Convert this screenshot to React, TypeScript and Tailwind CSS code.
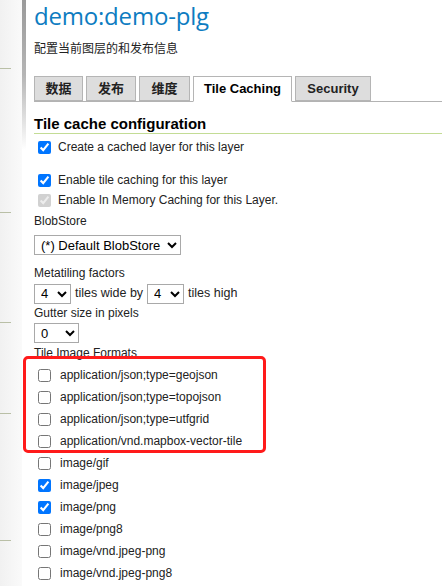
import React from "react";

const formats: { name: string; checked: boolean }[] = [
  { name: "application/json;type=geojson", checked: false },
  { name: "application/json;type=topojson", checked: false },
  { name: "application/json;type=utfgrid", checked: false },
  { name: "application/vnd.mapbox-vector-tile", checked: false },
  { name: "image/gif", checked: false },
  { name: "image/jpeg", checked: true },
  { name: "image/png", checked: true },
  { name: "image/png8", checked: false },
  { name: "image/vnd.jpeg-png", checked: false },
  { name: "image/vnd.jpeg-png8", checked: false },
];

const tabs = [
  { label: "数据", w: "w-[49px]" },
  { label: "发布", w: "w-[50px]" },
  { label: "维度", w: "w-[51px]" },
  { label: "Tile Caching", w: "w-[99px]" },
  { label: "Security", w: "w-[76px]" },
];

function Check({
  label,
  checked,
  disabled,
  className = "",
  gap = "mr-[7px]",
}: {
  label: string;
  checked?: boolean;
  disabled?: boolean;
  className?: string;
  gap?: string;
}) {
  return (
    <label className={"flex items-center " + className}>
      <input
        type="checkbox"
        defaultChecked={checked}
        disabled={disabled}
        className={"m-0 ml-[4px] h-[13px] w-[13px] " + gap}
      />
      <span>{label}</span>
    </label>
  );
}

function Select({ value, w }: { value: string; w: string }) {
  return (
    <select
      defaultValue={value}
      className={
        "h-[20px] border border-[#a9a9a9] bg-white pl-[2px] text-[13px] text-black " + w
      }
    >
      <option>{value}</option>
    </select>
  );
}

export default function App() {
  return (
    <div className="relative flex h-[586px] w-[442px] overflow-hidden bg-white text-[12px] text-[#222] [font-family:'Liberation_Sans',Arial,'Noto_Sans_CJK_SC',sans-serif]">
      {/* left nav stub */}
      <div className="flex w-[22px] flex-col bg-gradient-to-r from-[#f1f1f1] to-[#fafafa]">
        <div className="mt-[68px] h-px w-[11px] bg-[#b9bfa6]" />
        <div className="mt-[143px] h-px w-[11px] bg-[#b9bfa6]" />
        <div className="mt-[109px] h-px w-[11px] bg-[#b9bfa6]" />
        <div className="mt-[90px] h-px w-[11px] bg-[#b9bfa6]" />
        <div className="mt-[126px] h-px w-[11px] bg-[#b9bfa6]" />
      </div>
      <div className="h-[150px] w-[4px] bg-gradient-to-b from-[#9a9a9a] via-[#b5b5b5] to-white" />

      <div className="flex-1 pl-[8px]">
        <h1 className="mt-[-2px] h-[36px] text-[24px] leading-[36px] tracking-[-0.2px] text-[#0d7cc1] [font-family:'Open_Sans',sans-serif]">
          demo:demo-plg
        </h1>
        <p className="mt-[6px] h-[18px] leading-[18px]">配置当前图层的和发布信息</p>

        {/* tabs */}
        <div className="mt-[18px] flex h-[26px] items-end gap-[3px] border-b border-[#b3b3b3] text-[13px] font-bold">
          {tabs.map((t) => {
            const active = t.label === "Tile Caching";
            return (
              <div
                key={t.label}
                className={
                  "flex items-center justify-center border border-[#b5b5b5] " +
                  t.w +
                  (active
                    ? " mb-[-1px] h-[26px] border-b-white bg-white text-black"
                    : " h-[25px] bg-[#dddddd] text-[#222]")
                }
              >
                {t.label}
              </div>
            );
          })}
        </div>

        <h2 className="mt-[13px] h-[18px] text-[15px] font-bold leading-[18px] text-black">
          Tile cache configuration
        </h2>
        <div className="h-px w-full bg-[#c3dc95]" />

        <Check className="mt-[3px] h-[20px]" label="Create a cached layer for this layer" checked />
        <Check className="mt-[13px] h-[20px]" label="Enable tile caching for this layer" checked />
        <Check className="h-[20px]" label="Enable In Memory Caching for this Layer." checked disabled />

        <div className="h-[22px] leading-[22px]">BlobStore</div>
        <div className="mt-[3px] flex">
          <Select value="(*) Default BlobStore" w="w-[147px]" />
        </div>

        <div className="mt-[10px] h-[17px] leading-[17px]">Metatiling factors</div>
        <div className="mt-[1px] flex h-[21px] items-center gap-[3px] text-[12.5px]">
          <Select value="4" w="w-[37px]" />
          <span className="mx-[1px]">tiles wide by</span>
          <Select value="4" w="w-[37px]" />
          <span className="ml-[1px]">tiles high</span>
        </div>
        <div className="mt-[1px] h-[17px] leading-[17px]">Gutter size in pixels</div>
        <div className="mt-[1px] flex">
          <Select value="0" w="w-[45px]" />
        </div>
        <div className="mt-[2px] h-[16px] leading-[16px]">Tile Image Formats</div>

        <div className="mt-[3px] flex flex-col">
          {formats.map((f) => (
            <Check
              key={f.name}
              className="h-[22px]"
              gap="mr-[9px]"
              label={f.name}
              checked={f.checked}
            />
          ))}
        </div>
      </div>

      {/* red annotation box */}
      <div className="absolute left-[23px] top-[356px] h-[97px] w-[243px] rounded-[5px] border-[3px] border-[#ff1a1a]" />
    </div>
  );
}
